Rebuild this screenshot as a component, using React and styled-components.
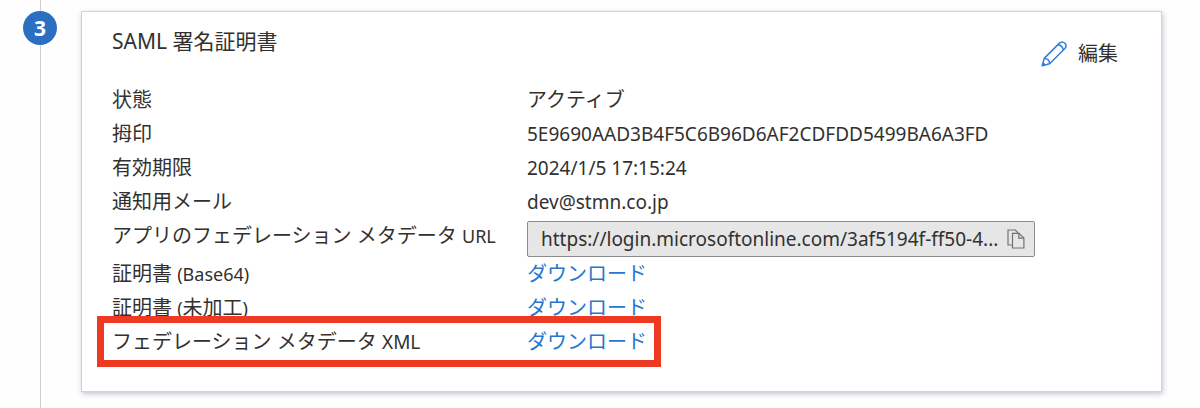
import React from 'react'
import styled, { createGlobalStyle } from 'styled-components'

const GlobalStyle = createGlobalStyle`
    * {
        box-sizing: border-box;
    }

    body {
        margin: 0;
        background: #fefefe;
        color: #323130;
        font-family: "Noto Sans", "Noto Sans CJK JP", sans-serif;
        font-size: 20px;
        line-height: 34px;
    }
`

const Step = styled.section`
    display: flex;
`

const Rail = styled.div`
    flex: 0 0 81px;
    padding: 11px 0 0 23px;
    background: linear-gradient(#d0d0d0, #d0d0d0) 40px 0 / 1px 100% no-repeat;
`

const StepNumber = styled.span`
    display: flex;
    align-items: center;
    justify-content: center;
    width: 34px;
    height: 34px;
    border-radius: 50%;
    background: #2a6fc0;
    color: #fff;
    font-size: 21px;
    font-weight: 700;
`

const Card = styled.div`
    flex: 1;
    min-width: 0;
    margin: 11px 38px 16px 0;
    padding: 12px 43px 32px 30px;
    border: 1px solid #d2d2d4;
    background: #fff;
    box-shadow: 1px 2px 5px rgba(60, 70, 110, 0.3);
`

const Header = styled.header`
    display: flex;
    justify-content: space-between;
    align-items: flex-start;
    margin-bottom: 12px;
`

const Title = styled.h2`
    margin: 0;
    font-size: 21px;
    font-weight: 400;
    line-height: 34px;
`

const EditButton = styled.button`
    display: flex;
    align-items: center;
    gap: 11px;
    margin: 0;
    padding: 13px 0 0;
    border: 0;
    background: none;
    color: inherit;
    font: inherit;
    cursor: pointer;
`

const Details = styled.dl`
    margin: 0;
`

const Row = styled.div`
    position: relative;
    display: grid;
    grid-template-columns: 415px minmax(0, 1fr);
`

const Term = styled.dt`
    margin: 0;
    white-space: nowrap;
`

const Value = styled.dd`
    margin: 0;
`

const Latin = styled.span`
    font-size: ${({ $small }) => ($small ? 18 : 19)}px;
`

const CopyField = styled.div`
    display: flex;
    align-items: center;
    max-width: 508px;
    height: 36px;
    margin: 2px 0 0;
    padding: 0 9px 0 13px;
    border: 1px solid #8c8c8c;
    border-radius: 2px;
    background: #e6e6e6;
`

const UrlInput = styled.input`
    flex: 1;
    min-width: 0;
    padding: 0;
    border: 0;
    outline: 0;
    background: none;
    color: inherit;
    font: inherit;
    font-size: 19px;
    text-overflow: ellipsis;
`

const CopyButton = styled.button`
    display: flex;
    padding: 0;
    border: 0;
    background: none;
    cursor: pointer;
`

const DownloadLink = styled.a`
    color: #2876d0;
    text-decoration: none;
`

const Highlight = styled.span`
    position: absolute;
    top: -9px;
    left: -15px;
    width: 564px;
    height: 51px;
    border: 7px solid #ee3a20;
    pointer-events: none;
`

const PencilIcon = () => (
    <svg width="26" height="26" viewBox="0 0 26 26" fill="none" stroke="#2f7de0" strokeWidth="1.5" strokeLinejoin="round" aria-hidden="true">
        <path d="M1.2 24.8 L3.2 17.4 L18.2 2.4 C20 .6 22.4 .8 23.9 2.2 C25.3 3.7 25.4 6 23.7 7.8 L8.6 22.8 Z" />
        <path d="M3.2 17.4 C6.4 17.4 8.6 19.6 8.6 22.8 M17 3.6 C19.6 4.2 21.8 6.4 22.4 9" />
        <path d="M1.2 24.8 L2 21.7 C3.3 22.1 3.9 22.7 4.3 24 Z" fill="#2f7de0" strokeWidth="0.6" />
    </svg>
)

const CopyIcon = () => (
    <svg width="18" height="20" viewBox="0 0 18 20" fill="none" stroke="#727272" strokeWidth="1.2" aria-hidden="true">
        <path d="M5.5 16 H1 V1 H8.3 L11.4 4.3" />
        <path d="M5.5 4.3 H12 L16.9 9 V19 H5.5 Z" />
        <path d="M11.8 4.3 V9.2 H16.9" />
    </svg>
)

const Detail = ({ label, children, marked }) => (
    <Row>
        <Term>{label}</Term>
        <Value>{children}</Value>
        {marked && <Highlight />}
    </Row>
)

const App = function () {

    return (
        <>
            <GlobalStyle />
            <Step>
                <Rail>
                    <StepNumber>3</StepNumber>
                </Rail>
                <Card>
                    <Header>
                        <Title>SAML 署名証明書</Title>
                        <EditButton type="button"><PencilIcon />編集</EditButton>
                    </Header>

                    <Details>
                        <Detail label="状態">アクティブ</Detail>
                        <Detail label="拇印"><Latin>5E9690AAD3B4F5C6B96D6AF2CDFDD5499BA6A3FD</Latin></Detail>
                        <Detail label="有効期限"><Latin>2024/1/5 17:15:24</Latin></Detail>
                        <Detail label="通知用メール"><Latin>dev@stmn.co.jp</Latin></Detail>
                        <Detail label={<label htmlFor="metadata-url">アプリのフェデレーション メタデータ <Latin $small>URL</Latin></label>}>
                            <CopyField>
                                <UrlInput id="metadata-url" readOnly value="https://login.microsoftonline.com/3af5194f-ff50-4..." />
                                <CopyButton type="button" aria-label="コピー"><CopyIcon /></CopyButton>
                            </CopyField>
                        </Detail>
                        <Detail label={<>証明書 <Latin $small>(Base64)</Latin></>}>
                            <DownloadLink href="#base64">ダウンロード</DownloadLink>
                        </Detail>
                        <Detail label={<>証明書 <Latin $small>(</Latin>未加工<Latin $small>)</Latin></>}>
                            <DownloadLink href="#raw">ダウンロード</DownloadLink>
                        </Detail>
                        <Detail marked label={<>フェデレーション メタデータ <Latin>XML</Latin></>}>
                            <DownloadLink href="#xml">ダウンロード</DownloadLink>
                        </Detail>
                    </Details>
                </Card>
            </Step>
        </>
    )
}

export default App
